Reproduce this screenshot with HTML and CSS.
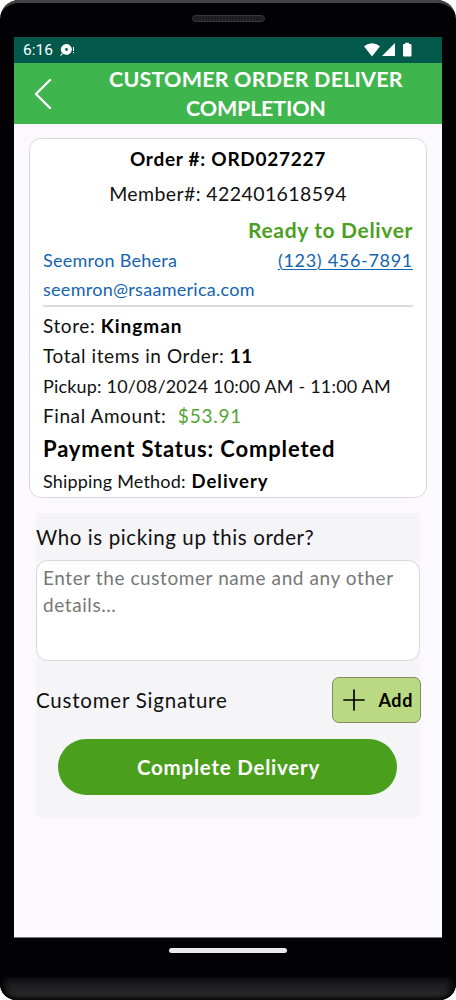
FILE: index.html
```html
<!DOCTYPE html>
<html lang="en">
<head>
    <meta charset="UTF-8">
    <meta name="viewport" content="width=device-width, initial-scale=1.0">
    <title>Customer Order Deliver Completion</title>
    <link rel="stylesheet" href="styles.css">
</head>
<body>
<div class="phone">
    <div class="phone-top">
        <div class="speaker"></div>
    </div>

    <div class="screen">
        <div class="status-bar">
            <span class="time">6:16</span>
            <svg class="notice" width="16" height="14" viewBox="0 0 16 14">
                <path fill="#fff" fill-rule="evenodd" d="M7.5 1a5.4 5.4 0 1 1-2.7 10.1L1.2 12.9l1.5-3.6A5.4 5.4 0 0 1 7.5 1zm0 4.1a1.4 1.4 0 1 0 0 2.8 1.4 1.4 0 0 0 0-2.8z"/>
                <path stroke="#02584b" stroke-width="1" d="M2 9.5l3 2.5"/>
                <path stroke="#fff" stroke-width="1" d="M14.5 4v4M14.5 9v1.3"/>
            </svg>
            <svg class="signals" width="48" height="16" viewBox="0 0 48 16">
                <path fill="#fff" d="M0 4.3Q8 -1.8 16 4.3L8 14.4z"/>
                <path fill="#fff" d="M31 1v13H18z"/>
                <path fill="#fff" d="M41 2V.8h4V2h1.6q.9 0 .9.9v10.6q0 .9-.9.9h-6.7q-.9 0-.9-.9V2.900q0-.9.9-.9z"/>
            </svg>
        </div>

        <header>
            <svg class="back" width="18" height="32" viewBox="0 0 18 32">
                <path fill="none" stroke="#fff" stroke-width="2.4" stroke-linecap="round" stroke-linejoin="round" d="M16 2L2 16l14 14"/>
            </svg>
            <h1>CUSTOMER ORDER DELIVER<br><span>COMPLETION</span></h1>
        </header>

        <main>
            <section class="order-card">
                <p class="order-number">Order #: ORD027227</p>
                <p class="member">Member#: 422401618594</p>
                <p class="order-status">Ready to Deliver</p>
                <div class="contact">
                    <span class="name">Seemron Behera</span>
                    <a class="tel" href="tel:1234567891">(123) 456-7891</a>
                </div>
                <p class="email">seemron@rsaamerica.com</p>
                <div class="details">
                    <p class="store">Store: <b>Kingman</b></p>
                    <p class="total">Total items in Order: <b>11</b></p>
                    <p class="pickup">Pickup: 10/08/2024 10:00 AM - 11:00 AM</p>
                    <p class="amount">Final Amount: <span>$53.91</span></p>
                    <p class="payment">Payment Status: Completed</p>
                    <p class="shipping">Shipping Method: <b>Delivery</b></p>
                </div>
            </section>

            <section class="pickup-form">
                <label for="customer">Who is picking up this order?</label>
                <textarea id="customer" placeholder="Enter the customer name and any other details..."></textarea>
                <div class="signature">
                    <span>Customer Signature</span>
                    <button class="add">
                        <svg width="22" height="22" viewBox="0 0 22 22">
                            <path stroke="#000" stroke-width="1.7" stroke-linecap="round" d="M11 1v20M1 11h20"/>
                        </svg>
                        Add
                    </button>
                </div>
                <button class="complete">Complete Delivery</button>
            </section>
        </main>
    </div>

    <div class="home-bar"></div>
    <div class="phone-bottom"></div>
</div>
</body>
</html>
```

FILE: styles.css
```css
* {
    box-sizing: border-box;
}

body {
    font-family: Lato, "Liberation Sans", sans-serif;
    margin: 0;
    background-color: #fff;
    color: #111;
}

h1,
p {
    margin: 0;
    white-space: nowrap;
}

.phone {
    width: 456px;
    height: 1000px;
    display: flex;
    flex-direction: column;
    background-color: #020103;
    border-radius: 19px 19px 16px 16px;
    overflow: hidden;
}

.phone-top {
    height: 37px;
    padding-top: 12px;
    border-top: 3px solid #434246;
    border-radius: 19px 19px 0 0;
}

.speaker {
    width: 73px;
    height: 7px;
    margin: 0 auto;
    border: 1px solid #39383b;
    border-radius: 4px;
    background: repeating-linear-gradient(90deg, #1c1c1e 0 2px, #28282a 2px 3px);
}

.screen {
    height: 901px;
    margin: 0 14px;
    background-color: #fbf9fd;
    border-bottom: 1px solid #77757a;
}

.status-bar {
    height: 26px;
    display: flex;
    align-items: center;
    padding: 0 30px 0 9px;
    background-color: #02584b;
    color: #fff;
    font-family: Roboto, sans-serif;
    font-size: 15.5px;
}

.notice {
    margin-left: 6px;
}

.signals {
    margin-left: auto;
}

header {
    height: 61px;
    display: flex;
    align-items: center;
    padding-left: 20px;
    background-color: #3fb54d;
    color: #fff;
}

h1 {
    margin-left: 57px;
    font-size: 21.5px;
    font-weight: bold;
    line-height: 29px;
    text-align: center;
    letter-spacing: 0.18px;
}

h1 span {
    letter-spacing: -0.2px;
}

main {
    padding: 14px 14px 0;
}

.order-card {
    height: 360px;
    margin: 0 1px;
    padding: 5px 13px 0;
    background-color: #fff;
    border: 1px solid #d8d7da;
    border-radius: 12px;
}

.order-number {
    font-size: 19px;
    font-weight: bold;
    line-height: 29px;
    text-align: center;
    letter-spacing: 0.74px;
    color: #000;
}

.member {
    margin-top: 5px;
    font-size: 19.5px;
    line-height: 31px;
    text-align: center;
    letter-spacing: 0.4px;
}

.order-status {
    margin-top: 5px;
    font-size: 21px;
    font-weight: bold;
    line-height: 31px;
    text-align: right;
    letter-spacing: 0.65px;
    color: #4b9f23;
}

.contact {
    display: flex;
    justify-content: space-between;
    font-size: 18px;
    line-height: 30px;
    letter-spacing: 0.26px;
    color: #1464b0;
}

.tel {
    color: inherit;
    letter-spacing: 0.7px;
    text-decoration-thickness: 1px;
    text-underline-offset: 2px;
}

.email {
    height: 30px;
    font-size: 18px;
    line-height: 28px;
    letter-spacing: 0.28px;
    color: #1464b0;
}

.details {
    border-top: 2px solid #dcdcdc;
    padding-top: 4px;
}

.details p {
    height: 30px;
    line-height: 30px;
}

.details b {
    color: #000;
}

.store,
.total,
.amount {
    font-size: 19px;
    letter-spacing: 0.58px;
}

.store b {
    letter-spacing: 1px;
}

.pickup,
.shipping {
    font-size: 18px;
    letter-spacing: 0.19px;
}

.shipping b {
    margin-left: 1px;
    font-size: 18.5px;
    letter-spacing: 1px;
}

.amount span {
    margin-left: 6px;
    letter-spacing: 0.75px;
    color: #55a535;
}

.details .payment {
    height: 35px;
    font-size: 22px;
    font-weight: bold;
    line-height: 35px;
    letter-spacing: 0.85px;
    color: #000;
}

.pickup-form {
    height: 304px;
    margin: 15px 8px 0;
    padding-top: 9px;
    background-color: #f5f4f7;
}

.pickup-form label {
    display: block;
    height: 38px;
    font-size: 20.5px;
    line-height: 31px;
    letter-spacing: 0.6px;
}

textarea {
    display: block;
    width: 384px;
    height: 101px;
    padding: 3px 0 3px 6px;
    background-color: #fff;
    border: 1px solid #d8d7da;
    border-radius: 12px;
    font-family: inherit;
    font-size: 19px;
    line-height: 27px;
    letter-spacing: 0.58px;
    resize: none;
}

textarea::placeholder {
    color: #777;
}

.signature {
    display: flex;
    justify-content: space-between;
    align-items: center;
    width: 385px;
    margin-top: 16px;
    font-size: 20.5px;
    letter-spacing: 0.78px;
}

.add {
    width: 89px;
    height: 46px;
    display: flex;
    justify-content: space-between;
    align-items: center;
    padding: 0 7px 0 10px;
    background-color: #b9d982;
    border: 1px solid #7e8b68;
    border-radius: 7px;
    font-family: inherit;
    font-size: 18px;
    font-weight: bold;
    letter-spacing: 0.6px;
    color: #000;
}

.complete {
    display: block;
    width: 339px;
    height: 56px;
    margin: 16px 0 0 22px;
    padding: 0 0 0 2px;
    background-color: #4a9f1d;
    border: none;
    border-radius: 28px;
    font-family: inherit;
    font-size: 20.5px;
    font-weight: bold;
    letter-spacing: 0.78px;
    color: #fff;
}

.home-bar {
    width: 118px;
    height: 5px;
    margin: 10px auto 0 169px;
    background-color: #e9e8ea;
    border-radius: 3px;
}

.phone-bottom {
    height: 23px;
    margin-top: auto;
    background: linear-gradient(#111012, #1c1b1d 35%, #29282b 75%, #111);
    border-radius: 0 0 16px 16px;
    box-shadow: inset 7px 0 7px -3px #000, inset -7px 0 7px -3px #000;
}
```
